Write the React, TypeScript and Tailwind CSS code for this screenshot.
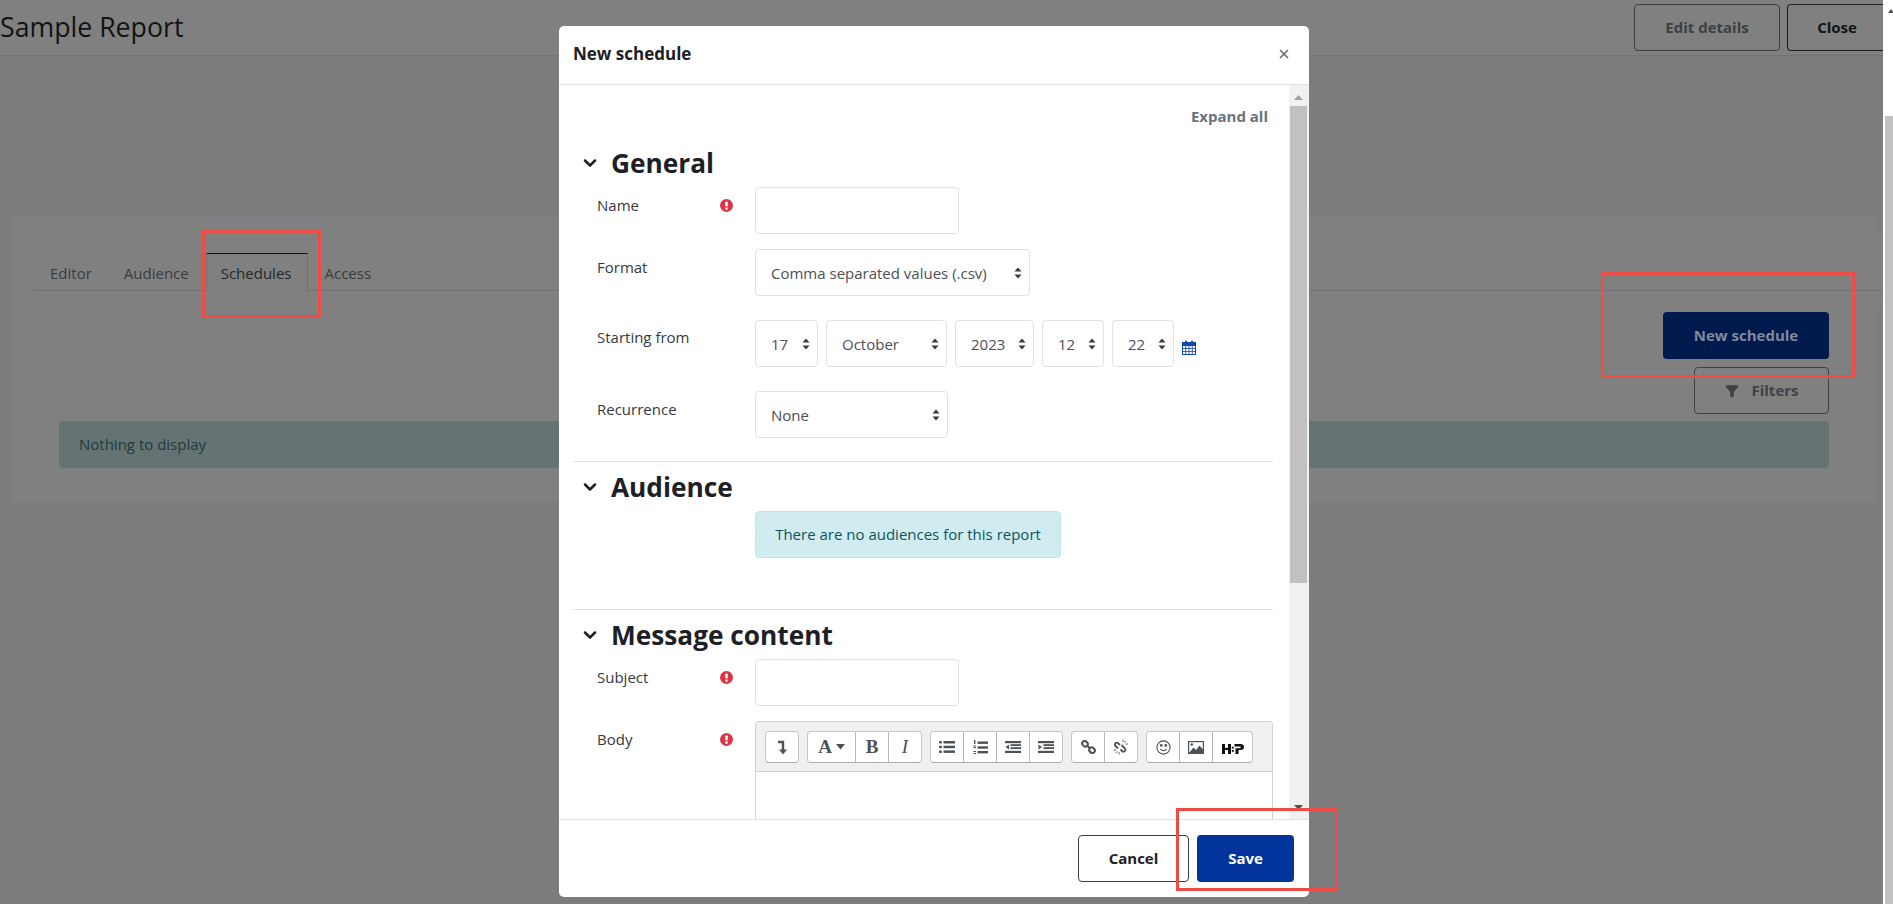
import React from 'react';
import { ChevronDown, Filter, X } from 'lucide-react';

const ff = "font-['Open_Sans','Noto_Sans',sans-serif]";

const SelectArrows = () => (
  <svg width="8" height="12" viewBox="0 0 8 12" className="shrink-0">
    <path d="M4 0.5 L7.5 4.5 H0.5 Z M4 11.5 L0.5 7.5 H7.5 Z" fill="#343a40" />
  </svg>
);

const Required = () => (
  <svg width="13" height="13" viewBox="0 0 13 13">
    <circle cx="6.5" cy="6.5" r="6.5" fill="#dc3545" />
    <rect x="5.2" y="2.4" width="2.6" height="5.2" rx="1" fill="#fff" />
    <rect x="5.2" y="8.6" width="2.6" height="2.2" rx="0.8" fill="#fff" />
  </svg>
);

const Select = ({ value, width }: { value: string; width: string }) => (
  <div className={`flex h-[47px] items-center justify-between rounded border border-[#dee2e6] bg-white pl-[15px] pr-[7px] text-[15px] text-[#495057] ${width}`}>
    <span className="whitespace-nowrap pt-[2px]">{value}</span>
    <SelectArrows />
  </div>
);

const Row = ({ label, required, top, className, children }: { label: string; required?: boolean; top: string; className: string; children: React.ReactNode }) => (
  <div className={`flex ${className}`}>
    <div className={`flex w-[182px] shrink-0 justify-between pl-[24px] pr-[22px] ${top}`}>
      <span className="text-[15px] leading-[20px] text-[#343a40]">{label}</span>
      {required && <span className="mt-[4px]"><Required /></span>}
    </div>
    {children}
  </div>
);

const SectionHead = ({ title, className }: { title: string; className: string }) => (
  <div className={`flex h-[36px] items-center ${className}`}>
    <ChevronDown size={20} strokeWidth={3} className="ml-[7px] text-[#1d2125]" />
    <h3 className="ml-[11px] whitespace-nowrap text-[26.25px] font-bold leading-[36px] text-[#1d2125]">{title}</h3>
  </div>
);

const Tb = ({ last, width, children }: { last?: boolean; width?: string; children: React.ReactNode }) => (
  <div className={`flex h-full items-center justify-center ${width ?? (last ? 'w-[32px]' : 'w-[33px]')} ${last ? '' : 'border-r border-[#b8bcc0]'}`}>{children}</div>
);

const Group = ({ children }: { children: React.ReactNode }) => (
  <div className="flex h-[32px] overflow-hidden rounded-[4px] border border-[#c4c8cc] border-b-[#a9adb1] bg-white">{children}</div>
);

const ic = '#4d5257';

const Toolbar = () => (
  <div className="flex h-[50px] items-start gap-[8px] border-b border-[#cfd3d7] bg-[#f0f0f0] pl-[9px] pt-[9px]">
    <Group>
      <Tb last>
        <svg width="12" height="15" viewBox="0 0 12 15"><path d="M2 2 H7 V10" fill="none" stroke={ic} strokeWidth="2.4" /><path d="M3 9.5 H11 L7 14.5 Z" fill={ic} /></svg>
      </Tb>
    </Group>
    <Group>
      <div className="flex h-full w-[48px] items-center justify-center gap-[4px] border-r border-[#b8bcc0]">
        <span className="font-['Liberation_Serif',serif] text-[19px] font-bold text-[#4d5257]">A</span>
        <svg width="9" height="6" viewBox="0 0 9 6"><path d="M0 0 H9 L4.5 5.5 Z" fill={ic} /></svg>
      </div>
      <Tb><span className="font-['Liberation_Serif',serif] text-[19px] font-bold text-[#4d5257]">B</span></Tb>
      <Tb last><span className="font-['Liberation_Serif',serif] text-[19px] italic text-[#4d5257]">I</span></Tb>
    </Group>
    <Group>
      <Tb>
        <svg width="16" height="12" viewBox="0 0 16 12" fill={ic}><rect x="0" y="0" width="3" height="2.6" rx="1" /><rect x="0" y="4.7" width="3" height="2.6" rx="1" /><rect x="0" y="9.4" width="3" height="2.6" rx="1" /><rect x="4.5" y="0" width="11.5" height="2.5" /><rect x="4.5" y="4.7" width="11.5" height="2.5" /><rect x="4.5" y="9.4" width="11.5" height="2.5" /></svg>
      </Tb>
      <Tb>
        <svg width="15" height="15" viewBox="0 0 15 15" fill={ic}><rect x="1" y="0" width="1.4" height="4" /><rect x="0.4" y="5.5" width="2.6" height="1" /><rect x="0.4" y="7.2" width="2.6" height="1" /><rect x="0.4" y="11" width="2.6" height="1" /><rect x="0.4" y="13" width="2.6" height="1" /><rect x="4.5" y="1.5" width="10.5" height="2.4" /><rect x="4.5" y="6.3" width="10.5" height="2.4" /><rect x="4.5" y="11" width="10.5" height="2.4" /></svg>
      </Tb>
      <Tb>
        <svg width="16" height="12" viewBox="0 0 16 12" fill={ic}><rect x="0" y="0" width="16" height="2.2" /><rect x="5.5" y="3.2" width="10.5" height="1.8" /><rect x="5.5" y="6.2" width="10.5" height="1.8" /><rect x="0" y="9.8" width="16" height="2.2" /><path d="M4 3.5 V8.5 L0.5 6 Z" /></svg>
      </Tb>
      <Tb last>
        <svg width="16" height="12" viewBox="0 0 16 12" fill={ic}><rect x="0" y="0" width="16" height="2.2" /><rect x="5.5" y="3.2" width="10.5" height="1.8" /><rect x="5.5" y="6.2" width="10.5" height="1.8" /><rect x="0" y="9.8" width="16" height="2.2" /><path d="M0.5 3.5 V8.5 L4 6 Z" /></svg>
      </Tb>
    </Group>
    <Group>
      <Tb>
        <svg width="15" height="14" viewBox="0 0 15 14" fill="none" stroke={ic} strokeWidth="2"><ellipse cx="4" cy="3.8" rx="3" ry="2.5" transform="rotate(40 4 3.8)" /><ellipse cx="11" cy="10.2" rx="3" ry="2.5" transform="rotate(40 11 10.2)" /><path d="M5.8 5.5 L9.2 8.6" /></svg>
      </Tb>
      <Tb last>
        <svg width="16" height="16" viewBox="0 0 16 16" fill="none" stroke={ic}>
          <path d="M7 6 L4.5 3.8 A2 2 0 0 0 2 6.5 L5 9.5 M8.5 6 L12 9.5 A2 2 0 0 1 9.5 12.5 L7.5 10.5" strokeWidth="1.8" />
          <path d="M10 0.5 V3 M12.8 1.8 L11.6 3.5 M15 5 H12.5 M0.5 11 H3 M2.8 14 L4 12.5 M6 15.5 V13" strokeWidth="0.9" />
        </svg>
      </Tb>
    </Group>
    <Group>
      <Tb>
        <svg width="15" height="15" viewBox="0 0 15 15" fill="none" stroke={ic} strokeWidth="1.1"><circle cx="7.5" cy="7.5" r="6.6" /><path d="M4.3 9.2 Q7.5 12.2 10.7 9.2" /><circle cx="5.3" cy="5.4" r="0.8" fill={ic} /><circle cx="9.7" cy="5.4" r="0.8" fill={ic} /></svg>
      </Tb>
      <Tb>
        <svg width="16" height="13" viewBox="0 0 16 13"><rect x="0.6" y="0.6" width="14.8" height="11.8" fill="#fff" stroke={ic} strokeWidth="1.2" /><path d="M1 12 L5.5 6.5 L8 9 L11.5 4.5 L15 8.5 V12 Z" fill={ic} /><circle cx="3.8" cy="3.5" r="1.3" fill={ic} /></svg>
      </Tb>
      <Tb last width="w-[39px]">
        <svg width="22" height="10" viewBox="0 0 22 10" fill="#111" className="mt-[3px]"><rect x="0" y="0" width="3" height="10" /><rect x="6" y="0" width="3" height="10" /><rect x="3" y="3.8" width="3" height="2.2" /><rect x="9.8" y="2.8" width="2" height="1.8" /><rect x="9.8" y="6" width="2" height="1.8" /><path d="M12.5 0 H18.5 Q22 0 22 3 Q22 6 18.5 6 H16.5 V10 H13.5 V4.2 H18.5 V2.4 H12.5 Z" /></svg>
      </Tb>
    </Group>
  </div>
);

const RedBox = ({ className }: { className: string }) => (
  <div className={`pointer-events-none absolute border-[3px] border-[#ef4c45] ${className}`} />
);

export default function App() {
  return (
    <div className={`relative flex h-[904px] w-[1893px] overflow-hidden bg-[#7b7c7d] ${ff}`}>
      {/* page behind the backdrop */}
      <div className="w-[1883px] shrink-0">
        <header className="flex h-[56px] items-start justify-between border-b border-[#727475] bg-[#808080]">
          <h1 className="text-[26.7px] leading-[54px] text-[#111315]">Sample Report</h1>
          <div className="flex gap-[7px] pt-[4px]">
            <div className="flex h-[47px] w-[146px] items-center justify-center rounded border border-[#3b3e41] text-[15px] font-bold text-[#3c4043]">Edit details</div>
            <div className="flex h-[47px] w-[96px] items-center justify-center rounded-l border border-r-0 border-[#1d2022] pl-[3px] text-[15px] font-bold text-[#121416]">Close</div>
          </div>
        </header>
        <main className="pl-[12px] pt-[159px]">
          <section className="h-[287px] w-[1864px] rounded-[5px] bg-[#808080] pt-[18px]">
            <div className="ml-[22px] h-[77px] w-[1848px] bg-[#808080] pt-[20px]">
              <nav className="flex h-[38px] border-b border-[#6e7072] text-[15px] text-[#393c3f]">
                <span className="ml-[16px] pt-[9px]">Editor</span>
                <span className="ml-[32px] pt-[9px]">Audience</span>
                <span className="ml-[17px] h-[38px] border-x border-t border-[#6e7072] border-t-[#111] bg-[#808080] pl-[14px] pr-[16px] pt-[8px] text-[#25282a]">Schedules</span>
                <span className="ml-[16px] pt-[9px]">Access</span>
              </nav>
            </div>
            <div className="flex flex-col items-end pr-[47px] pt-[2px]">
              <div className="flex h-[47px] w-[166px] items-center justify-center rounded bg-[#001a4d] text-[15px] font-bold text-[#7f8a9f]">New schedule</div>
              <div className="mt-[8px] flex h-[47px] w-[135px] items-center justify-center gap-[12px] rounded border border-[#3f4245] pl-[1px] text-[15px] font-bold text-[#3f4245]">
                <Filter size={14} fill="#3f4245" strokeWidth={2} />
                Filters
              </div>
            </div>
            <div className="mx-[47px] mt-[7px] flex h-[47px] items-center rounded bg-[#667373] pl-[20px] text-[15px] text-[#1f3a3f]">Nothing to display</div>
          </section>
        </main>
      </div>

      {/* window scrollbar */}
      <div className="flex w-[10px] flex-col overflow-hidden bg-white">
        <div className="h-[116px] pl-[5px] pt-[9px]">
          <svg width="6" height="4" viewBox="0 0 6 4"><path d="M3 0 L6 4 H0 Z" fill="#505050" /></svg>
        </div>
        <div className="ml-[2px] flex-1 bg-[#c1c1c1]" />
      </div>

      {/* modal */}
      <div className="absolute left-[559px] top-[26px] flex h-[871px] w-[750px] flex-col overflow-hidden rounded-[5px] bg-white">
        <div className="flex h-[59px] shrink-0 items-center justify-between border-b border-[#dee2e6] pb-[2px] pl-[14px] pr-[18px]">
          <h2 className="text-[17px] font-bold text-[#1d2125]">New schedule</h2>
          <X size={14} strokeWidth={3} className="text-[#6a737b]" />
        </div>
        <div className="flex min-h-0 flex-1">
          <div className="min-w-0 flex-1 overflow-hidden pl-[14px] pr-[16px]">
            <div className="pr-[5px] pt-[21px] text-right text-[15px] font-bold leading-[20px] text-[#6a737b]">Expand all</div>
            <SectionHead title="General" className="mt-[19px]" />
            <Row label="Name" required top="pt-[8px]" className="mt-[6px]">
              <div className="h-[47px] w-[204px] rounded border border-[#dee2e6]" />
            </Row>
            <Row label="Format" top="pt-[8px]" className="mt-[15px]">
              <Select value="Comma separated values (.csv)" width="w-[275px]" />
            </Row>
            <Row label="Starting from" top="pt-[7px]" className="mt-[24px]">
              <div className="flex items-start gap-[8px]">
                <Select value="17" width="w-[63px]" />
                <Select value="October" width="w-[121px]" />
                <Select value="2023" width="w-[79px]" />
                <Select value="12" width="w-[62px]" />
                <Select value="22" width="w-[62px]" />
                <svg width="14" height="15" viewBox="0 0 14 15" className="mt-[20px]" fill="none">
                  <rect x="0.5" y="2.5" width="13" height="12" fill="#fff" stroke="#0f47ad" />
                  <rect x="0.5" y="2.5" width="13" height="3.5" fill="#0f47ad" />
                  <rect x="3" y="0.5" width="2" height="3.5" rx="1" fill="#0f47ad" />
                  <rect x="9" y="0.5" width="2" height="3.5" rx="1" fill="#0f47ad" />
                  <path d="M0.5 8.5 H13.5 M0.5 11.5 H13.5 M3.7 6 V14.5 M7 6 V14.5 M10.3 6 V14.5" stroke="#0f47ad" strokeWidth="0.8" />
                </svg>
              </div>
            </Row>
            <Row label="Recurrence" top="pt-[8px]" className="mt-[24px]">
              <Select value="None" width="w-[193px]" />
            </Row>
            <div className="mt-[23px] border-t border-[#dee2e6]" />
            <SectionHead title="Audience" className="mt-[7px]" />
            <div className="ml-[182px] mt-[6px] flex h-[47px] w-[306px] items-center justify-center rounded border border-[#bee5eb] bg-[#d1ecf1] text-[15px] text-[#0c5460]">There are no audiences for this report</div>
            <div className="mt-[51px] border-t border-[#dee2e6]" />
            <SectionHead title="Message content" className="mt-[7px]" />
            <Row label="Subject" required top="pt-[8px]" className="mt-[6px]">
              <div className="h-[47px] w-[204px] rounded border border-[#dee2e6]" />
            </Row>
            <Row label="Body" required top="pt-[8px]" className="mt-[15px]">
              <div className="h-[120px] w-[518px] shrink-0 rounded-t-[3px] border border-[#cfd3d7]">
                <Toolbar />
              </div>
            </Row>
          </div>
          {/* modal body scrollbar */}
          <div className="flex w-[20px] shrink-0 flex-col items-center bg-[#f1f1f1] pr-[2px]">
            <div className="flex h-[21px] items-center pt-[3px]">
              <svg width="9" height="5" viewBox="0 0 9 5"><path d="M4.5 0 L9 5 H0 Z" fill="#a3a3a3" /></svg>
            </div>
            <div className="h-[477px] w-[17px] bg-[#c1c1c1]" />
            <div className="flex-1" />
            <svg width="9" height="5" viewBox="0 0 9 5" className="mb-[9px]"><path d="M0 0 H9 L4.5 5 Z" fill="#505050" /></svg>
          </div>
        </div>
        <div className="flex h-[78px] shrink-0 items-start justify-end gap-[8px] border-t border-[#dee2e6] pr-[15px] pt-[15px]">
          <div className="flex h-[47px] w-[111px] items-center justify-center rounded border border-[#3b3e41] text-[15px] font-bold text-[#1d2125]">Cancel</div>
          <div className="flex h-[47px] w-[97px] items-center justify-center rounded bg-[#02349b] text-[15px] font-bold text-white">Save</div>
        </div>
      </div>

      {/* annotation boxes drawn on the screenshot */}
      <RedBox className="left-[202px] top-[230px] h-[88px] w-[119px]" />
      <RedBox className="left-[1601px] top-[272px] h-[106px] w-[254px]" />
      <RedBox className="left-[1176px] top-[808px] h-[83px] w-[162px]" />
    </div>
  );
}
